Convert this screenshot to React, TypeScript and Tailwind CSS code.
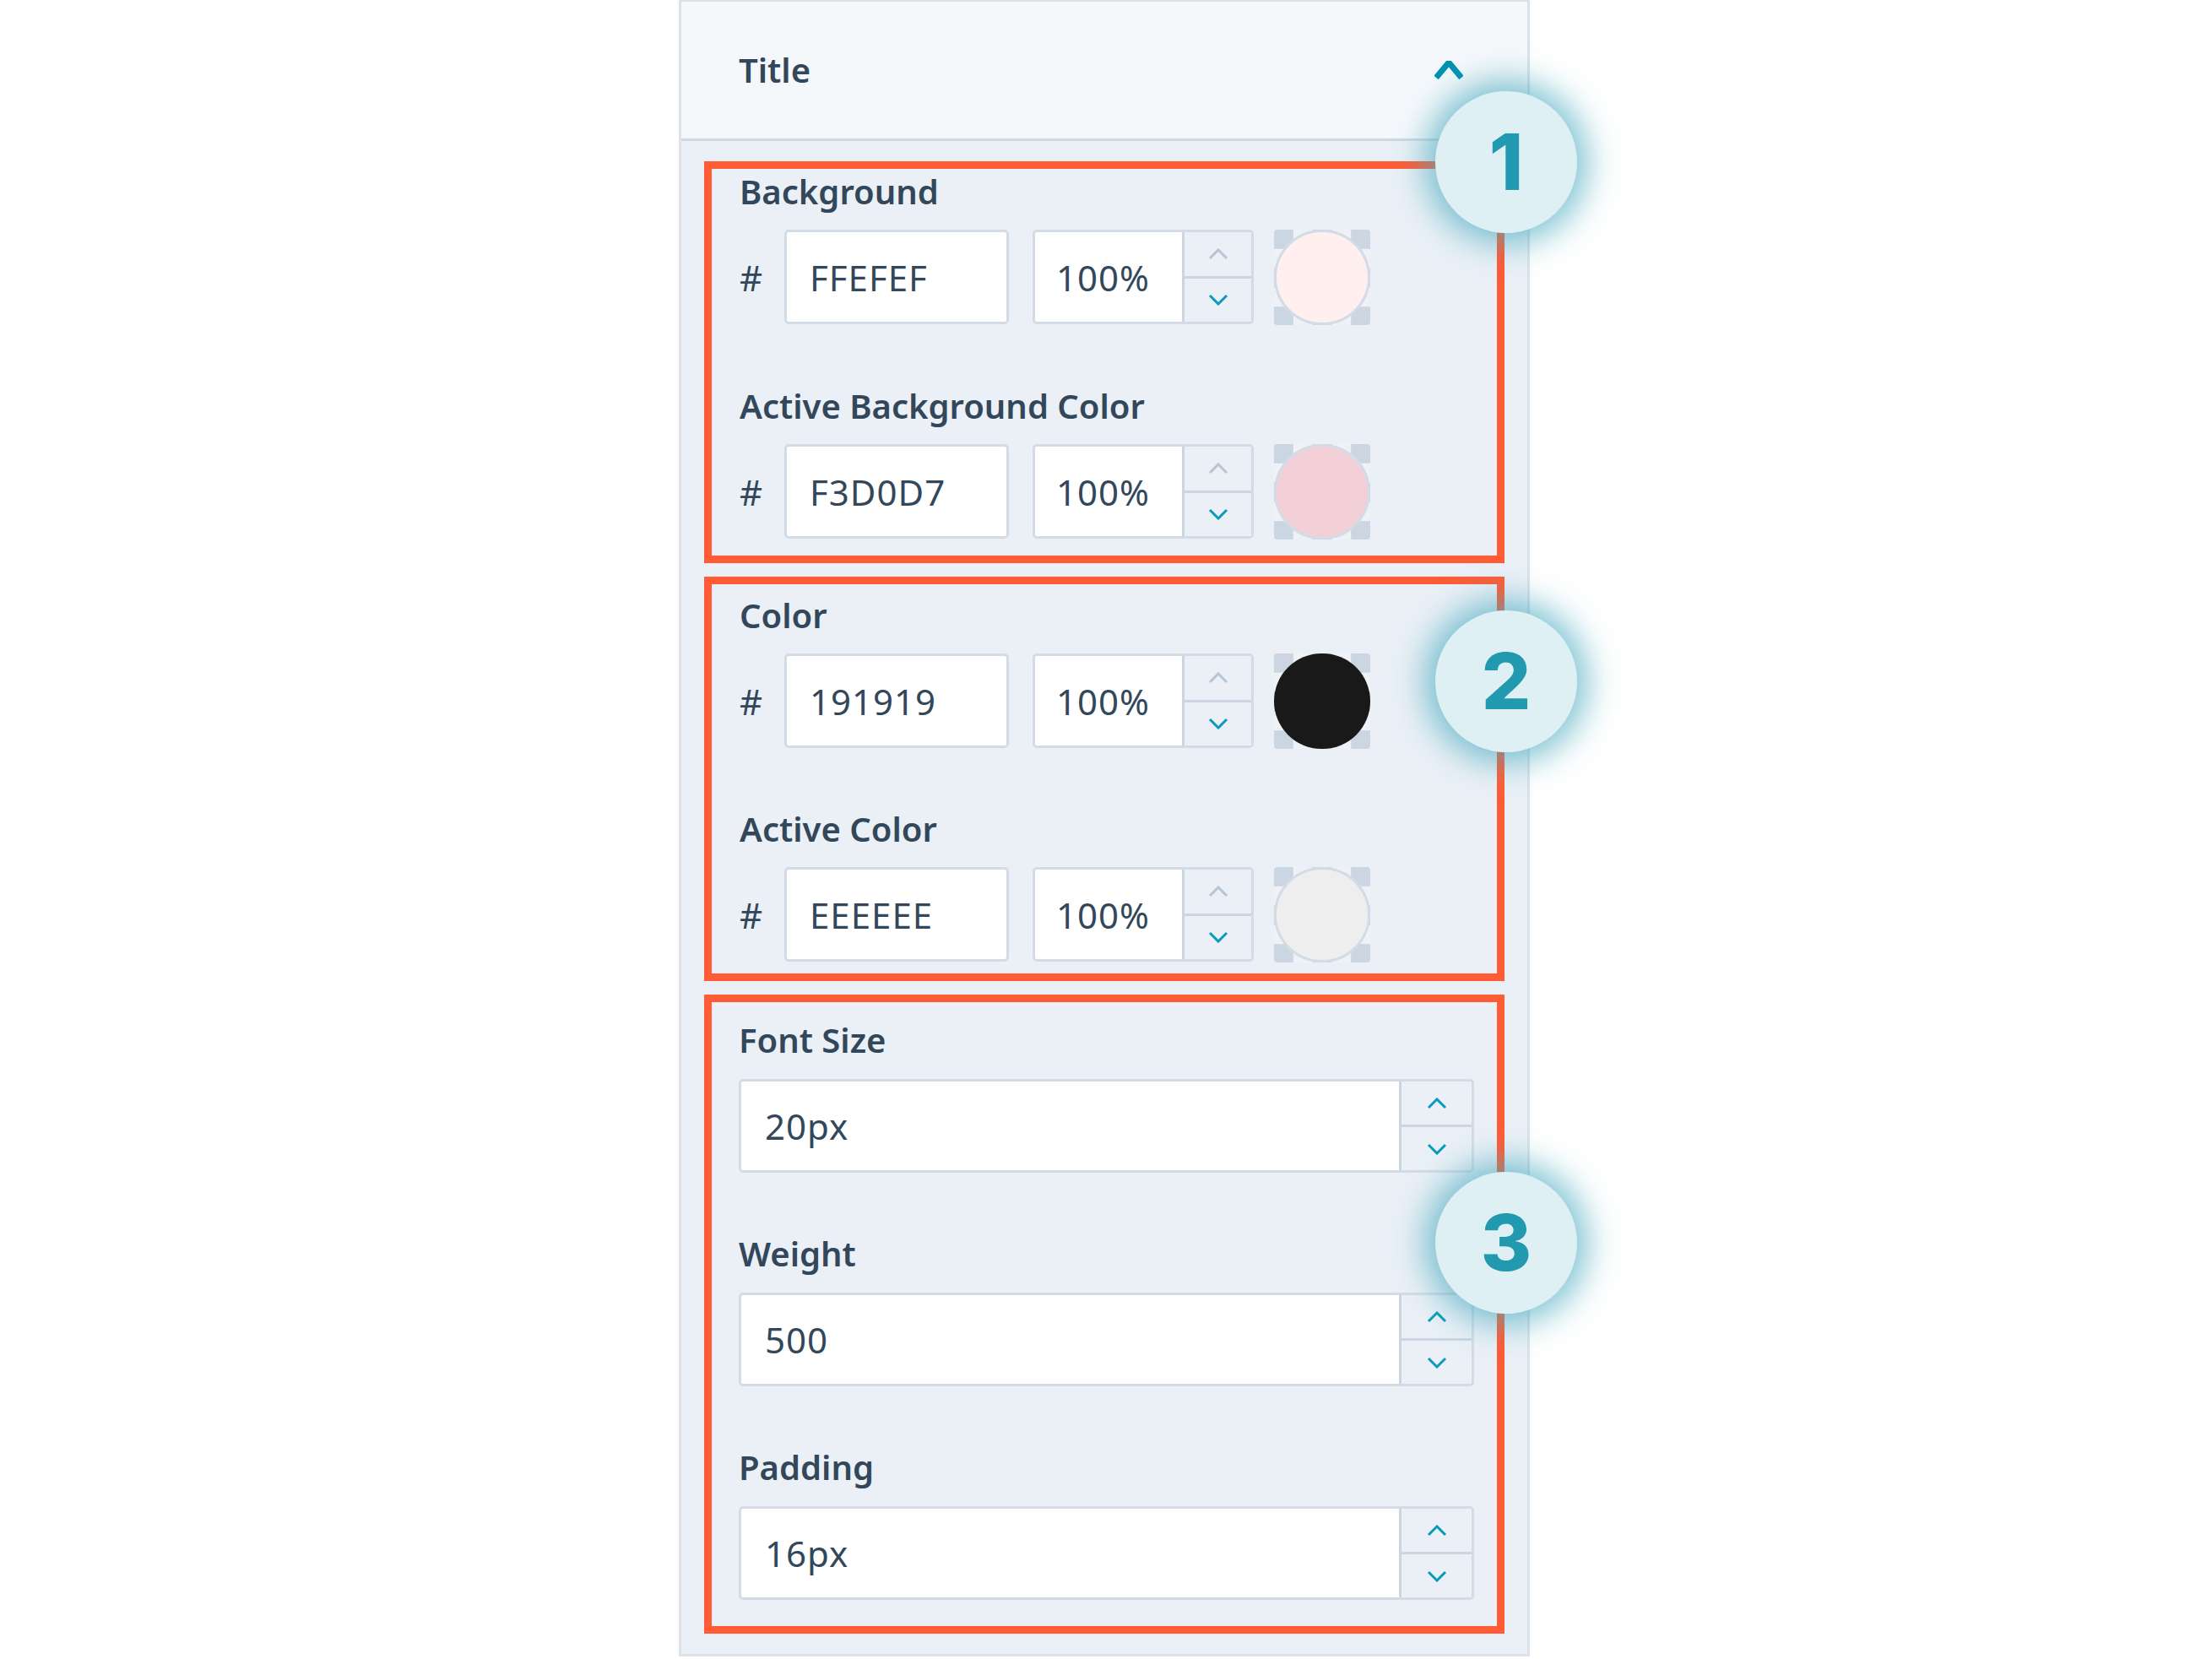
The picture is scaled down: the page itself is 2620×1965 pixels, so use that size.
import React from "react";

const FONT = { fontFamily: '"Noto Sans", "Open Sans", sans-serif' };

function Chevron({ up, color, w = 24, h = 14, sw = 3 }: { up?: boolean; color: string; w?: number; h?: number; sw?: number }) {
  const pts = up ? `2,${h - 2} ${w / 2},2 ${w - 2},${h - 2}` : `2,2 ${w / 2},${h - 2} ${w - 2},2`;
  return (
    <svg width={w} height={h} viewBox={`0 0 ${w} ${h}`} fill="none">
      <polyline points={pts} stroke={color} strokeWidth={sw} strokeLinejoin="miter" />
    </svg>
  );
}

function Stepper({ upColor, width }: { upColor: string; width: string }) {
  return (
    <div className={`flex flex-col border-l-[3px] border-[#cbd6e2] bg-[#eaf0f6] ${width}`}>
      <div className="flex flex-1 items-center justify-center border-b-[3px] border-[#cbd6e2]">
        <Chevron up color={upColor} />
      </div>
      <div className="flex flex-1 items-center justify-center">
        <Chevron color="#0a9bbb" />
      </div>
    </div>
  );
}

function Label({ children }: { children: React.ReactNode }) {
  return <div className="h-[48px] text-[40px] leading-[48px] font-semibold text-[#33475b]">{children}</div>;
}

function ColorField({ label, hex, swatch, ring }: { label: string; hex: string; swatch: string; ring: boolean }) {
  return (
    <div className="flex flex-col">
      <Label>{label}</Label>
      <div className="mt-[21px] flex h-[112px] items-stretch">
        <div className="flex w-[53px] items-center text-[42px] text-[#33475b]">#</div>
        <div className="flex w-[266px] items-center rounded-[5px] border-[3px] border-[#d3dce6] bg-white pl-[27px] text-[42px] tracking-[1px] text-[#33475b]">
          {hex}
        </div>
        <div className="ml-[28px] flex w-[262px] overflow-hidden rounded-[5px] border-[3px] border-[#d3dce6] bg-white">
          <div className="flex flex-1 items-center pl-[25px] text-[42px] tracking-[1px] text-[#33475b]">100%</div>
          <Stepper upColor="#b6c5d6" width="w-[82px]" />
        </div>
        <div className="relative ml-[24px] h-[113px] w-[114px] overflow-hidden rounded-[4px] bg-[conic-gradient(#eef2f6_25%,#cbd6e2_0_50%,#eef2f6_0_75%,#cbd6e2_0)] bg-[length:45.6px_45.6px]">
          <div
            className={`absolute inset-0 rounded-full ${ring ? "border-[3px] border-[#d3dce6]" : ""}`}
            style={{ backgroundColor: swatch }}
          />
        </div>
      </div>
    </div>
  );
}

function NumberField({ label, value }: { label: string; value: string }) {
  return (
    <div className="flex flex-col">
      <Label>{label}</Label>
      <div className="mt-[22px] flex h-[111px] w-[871px] overflow-hidden rounded-[5px] border-[3px] border-[#d3dce6] bg-white">
        <div className="flex flex-1 items-center pl-[28px] text-[42px] tracking-[1px] text-[#33475b]">{value}</div>
        <Stepper upColor="#0a9bbb" width="w-[86px]" />
      </div>
    </div>
  );
}

function Badge({ n, top }: { n: string; top: string }) {
  return (
    <div
      className={`absolute left-[893px] ${top} flex h-[168px] w-[168px] items-center justify-center rounded-full bg-[#dff0f4] shadow-[0_0_38px_12px_rgba(70,168,190,0.7)]`}
    >
      <span className="text-[92px] font-extrabold leading-none text-[#2199ae]" style={{ fontFamily: "Inter, sans-serif" }}>
        {n}
      </span>
    </div>
  );
}

export default function App() {
  return (
    <div className="min-h-screen w-full bg-white" style={FONT}>
      <div className="relative ml-[804px] w-[1008px] border-x-[3px] border-t-2 border-b-[3px] border-[#dbe2ea]">
        {/* Header */}
        <div className="flex h-[165px] items-center justify-between border-b-[3px] border-[#cfd8e2] bg-[#f5f8fb] pl-[68px] pr-[76px]">
          <span className="text-[40px] font-semibold text-[#33475b]">Title</span>
          <Chevron up color="#0091ae" w={34} h={22} sw={7} />
        </div>

        {/* Body */}
        <div className="flex flex-col gap-[16px] bg-[#eaf0f6] px-[27px] pt-[24px] pb-[24px]">
          <div className="flex flex-col border-[9px] border-[#ff5c35] pl-[33px] pt-[3px] pb-[20px]">
            <ColorField label="Background" hex="FFEFEF" swatch="#ffefef" ring />
            <div className="h-[73px]" />
            <ColorField label="Active Background Color" hex="F3D0D7" swatch="#f3d0d7" ring />
          </div>

          <div className="flex flex-col border-[9px] border-[#ff5c35] pl-[33px] pt-[13px] pb-[14px]">
            <ColorField label="Color" hex="191919" swatch="#191919" ring={false} />
            <div className="h-[72px]" />
            <ColorField label="Active Color" hex="EEEEEE" swatch="#eeeeee" ring />
          </div>

          <div className="flex flex-col gap-[72px] border-[9px] border-[#ff5c35] pl-[32px] pt-[21px] pb-[31px]">
            <NumberField label="Font Size" value="20px" />
            <NumberField label="Weight" value="500" />
            <NumberField label="Padding" value="16px" />
          </div>
        </div>

        {/* Annotation badges */}
        <Badge n="1" top="top-[106px]" />
        <Badge n="2" top="top-[721px]" />
        <Badge n="3" top="top-[1386px]" />
      </div>
    </div>
  );
}
